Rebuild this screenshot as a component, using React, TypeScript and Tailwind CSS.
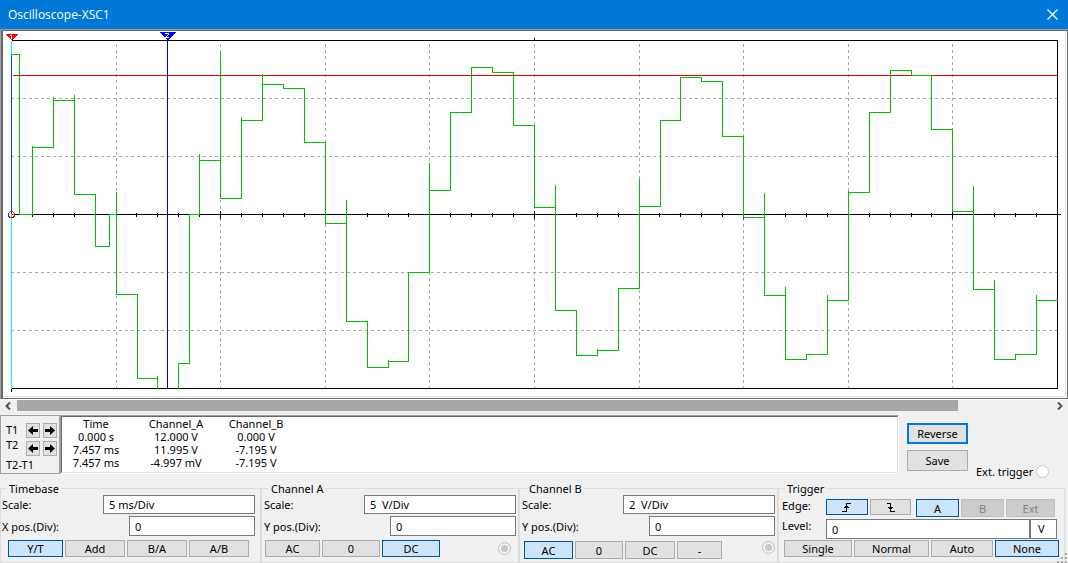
import type { ReactNode } from "react";
import clsx from "clsx";

const GRID_X = [116, 220, 325, 429, 534, 639, 743, 848, 952];
const GRID_Y = [98, 156, 272, 330];
const MAJOR_TICKS = [220, 534, 743, 952];
const MINOR_TICKS = Array.from({ length: 50 }, (_, i) => Math.round(10.96 + 20.92 * i)).slice(1);

// channel B, clipped at the bottom of the screen between 157 and 178
const TRACE =
  "M11 54H19V214H32V145V147H53V96V100H74V94V194H95V246H109V214H116V191V294H137V293V378H157V375V388" +
  "M178 388V363H189V214H199V153V160H220V51V198H241V116V120H262V73V84H283V88H304V142H325V223H346V199V321" +
  "H367V367H388V359V361H408V272H429V162V190H450V112H471V67H492V72H513V71V125H534V207H555V184V310" +
  "H576V355H597V348V350H618V288H639V178V206H660V120H680V77H701V81H722V80V136H743V217H764V192V295" +
  "H785V286V359H806V354H827V294V300H848V190V192H869V111V112H890V70H911V75H931V129H952V211H973V185V289" +
  "H994V279V359H1015V354H1036V294V300H1057";

const READINGS = [
  ["0.000 s", "12.000 V", "0.000 V"],
  ["7.457 ms", "11.995 V", "-7.195 V"],
  ["7.457 ms", "-4.997 mV", "-7.195 V"],
];

const TitleBar = () => (
  <header className="flex h-[29px] items-center justify-between bg-[#0078d7] pr-[10px] pl-2 text-white">
    <h1 className="font-['Open_Sans',sans-serif] text-xs">Oscilloscope-XSC1</h1>
    <button type="button" aria-label="Close">
      <svg width="11" height="11" viewBox="0 0 11 11" fill="none" stroke="currentColor" strokeWidth="1.3">
        <path d="M.5 .5l10 10M10.5 .5l-10 10" />
      </svg>
    </button>
  </header>
);

const Screen = () => (
  <div className="border-t border-r border-b border-l border-t-[#a0a0a0] border-r-[#696969] border-b-[#696969] border-l-[#a0a0a0] bg-white">
    <div className="border-t border-l-2 border-t-[#696969] border-l-[#696969] pr-px pb-px">
      <div className="border-r border-b border-[#e3e3e3]">
        <svg
          className="block h-[365px] w-full"
          viewBox="3 31 1062 365"
          preserveAspectRatio="none"
          shapeRendering="crispEdges"
          fill="none"
        >
          <g transform="translate(.5 .5)">
            <g stroke="#a6a6a6" strokeDasharray="3 3">
              {GRID_X.map((x) => (
                <path key={x} d={`M${x} 43.5V388`} />
              ))}
              {GRID_Y.map((y) => (
                <path key={y} d={`M10.5 ${y}H1057`} />
              ))}
            </g>
            <g stroke="#000">
              <path d="M11 40H1057V388H11V391M534 37V40M11 214H1060" />
              {MINOR_TICKS.map((x) => (
                <path key={x} d={`M${x} 212.5V216.5`} />
              ))}
              {MAJOR_TICKS.map((x) => (
                <path key={x} d={`M${x} 210.5V218.5`} />
              ))}
            </g>
            <path d="M12 75H1057" stroke="#e60000" />
            <path d={TRACE} stroke="#00c000" />
            <path d="M11 40.5V388" stroke="#00ffff" />
            <path d="M11 54V213" stroke="#0040ff" />
            <path d="M167 40V387.5" stroke="#0000d8" />
            <circle cx="11" cy="214" r="3" stroke="#e00000" />
            <path d="M8 214H14" stroke="#00ffff" strokeDasharray="1 1" />
          </g>
          <path d="M5 34H18L11.5 40.5Z" fill="#ff0000" />
          <path d="M10 35H12V39H11V36H10Z" fill="#fff" />
          <path d="M159 32H176L167.5 40.5Z" fill="#0000ff" />
          <path d="M165 33h4v2h-1v1h-1v1h2v1h-4v-1h1v-1h1v-1h1v-1h-3z" fill="#fff" />
        </svg>
      </div>
    </div>
  </div>
);

const ScrollArrow = ({ label, d }: { label: string; d: string }) => (
  <button type="button" aria-label={label} className="flex w-[17px] justify-center">
    <svg width="8" height="8" viewBox="0 0 8 8" fill="none" stroke="#505050" strokeWidth="2">
      <path d={d} />
    </svg>
  </button>
);

const ScrollBar = () => (
  <div className="h-4 border-t border-white">
    <div className="flex h-[11px] items-center">
      <ScrollArrow label="Scroll left" d="M5 .5L1.500 4L5 7.500" />
      <div className="h-[11px] flex-1">
        <div className="h-full w-[91%] bg-[#a6a6a6]" />
      </div>
      <ScrollArrow label="Scroll right" d="M2 .5L5.500 4L2 7.500" />
    </div>
  </div>
);

type ButtonProps = {
  children: ReactNode;
  className?: string;
  active?: boolean;
  disabled?: boolean;
  focused?: boolean;
  label?: string;
};

const Button = ({ children, className, active, disabled, focused, label }: ButtonProps) => (
  <button
    type="button"
    disabled={disabled}
    aria-label={label}
    className={clsx(
      "flex items-center justify-center",
      focused ? "border-2 border-[#0078d7] bg-[#e1e1e1]" : "border",
      active && "border-[#00549a] bg-[#cce4f7]",
      disabled && "border-[#bfbfbf] bg-[#cccccc] text-[#838383]",
      !active && !disabled && !focused && "border-[#adadad] bg-[#e1e1e1]",
      className,
    )}
  >
    {children}
  </button>
);

const CursorArrows = ({ name }: { name: string }) => (
  <div className="flex gap-[3px]">
    <Button label={`${name} left`} className="h-[15px] w-[14px]">
      <svg width="10" height="9" viewBox="0 0 10 9">
        <path d="M0 4.500L5 0V3H10V6H5V9Z" />
      </svg>
    </Button>
    <Button label={`${name} right`} className="h-[15px] w-[14px]">
      <svg width="10" height="9" viewBox="0 0 10 9">
        <path d="M10 4.500L5 0V3H0V6H5V9Z" />
      </svg>
    </Button>
  </div>
);

const Readout = () => (
  <div className="flex h-[59px]">
    <div className="flex w-[60px] justify-between border border-[#a0a0a0] pt-[7px] pr-[2px] pl-[5px]">
      <div className="flex flex-col whitespace-nowrap">
        <span className="h-[15px]">T1</span>
        <span className="h-5">T2</span>
        <span className="w-0">T2-T1</span>
      </div>
      <div className="flex flex-col gap-[3px]">
        <CursorArrows name="T1" />
        <CursorArrows name="T2" />
      </div>
    </div>
    <div className="flex-1 border border-t-[#a0a0a0] border-r-white border-b-white border-l-[#a0a0a0]">
      <div className="h-full border border-t-[#696969] border-r-[#e3e3e3] border-b-[#e3e3e3] border-l-[#696969] bg-white">
        <table className="table-fixed text-center leading-[13px]">
          <thead>
            <tr>
              <th className="w-[68px] font-normal">Time</th>
              <th className="w-[92px] font-normal">Channel_A</th>
              <th className="w-[68px] font-normal">Channel_B</th>
            </tr>
          </thead>
          <tbody>
            {READINGS.map((row, i) => (
              <tr key={i}>
                {row.map((value, j) => (
                  <td key={j}>{value}</td>
                ))}
              </tr>
            ))}
          </tbody>
        </table>
      </div>
    </div>
    <div className="flex w-[169px] items-start pl-2">
      <div className="flex flex-col gap-[6px] pt-2">
        <Button focused className="h-[21px] w-[61px]">Reverse</Button>
        <Button className="h-[21px] w-[61px]">Save</Button>
      </div>
      <label className="flex items-center gap-[3px] pt-[50px] pl-2 whitespace-nowrap">
        Ext. trigger
        <input
          type="radio"
          name="ext"
          className="size-[13px] appearance-none rounded-full border border-[#c8c8c8] bg-white"
        />
      </label>
    </div>
  </div>
);

const Group = ({ title, className, children }: { title: string; className: string; children: ReactNode }) => (
  <fieldset className={clsx("min-w-0 border border-[#dcdcdc] pb-[3px]", className)}>
    <legend className="ml-[5px] px-[2px]">{title}</legend>
    <div className="flex flex-col">{children}</div>
  </fieldset>
);

type FieldProps = { id: string; label: string; value: string; className: string };

const Field = ({ id, label, value, className }: FieldProps) => (
  <div className="flex items-end justify-between">
    <label htmlFor={id} className="pb-[3px] whitespace-nowrap">
      {label}
    </label>
    <input id={id} defaultValue={value} className={clsx("border border-[#7a7a7a] bg-white px-[5px]", className)} />
  </div>
);

const Coupling = ({ name, className }: { name: string; className?: string }) => (
  <input
    type="radio"
    aria-label={name}
    disabled
    className={clsx(
      "ml-auto size-[13px] appearance-none rounded-full border border-[#c8c8c8] bg-[#c8c8c8] shadow-[inset_0_0_0_2px_#f4f4f4]",
      className,
    )}
  />
);

const Controls = () => (
  <div className="grid grid-cols-[261fr_258fr_259fr_287fr] pt-2 pr-[3px]">
    <Group title="Timebase" className="pr-[5px] pl-px">
      <Field id="tb-scale" label="Scale:" value="5 ms/Div" className="h-[19px] w-[152px]" />
      <Field id="tb-pos" label="X pos.(Div):" value="0" className="mt-[2px] h-5 w-[126px]" />
      <div className="mt-1 flex gap-[2px] pl-[6px]">
        <Button active className="h-[17px] w-[55px]">Y/T</Button>
        <Button className="h-[17px] w-[60px]">Add</Button>
        <Button className="h-[17px] w-[60px]">B/A</Button>
        <Button className="h-[17px] w-[60px]">A/B</Button>
      </div>
    </Group>

    <Group title="Channel A" className="pr-[2px] pl-[2px]">
      <Field id="a-scale" label="Scale:" value="5  V/Div" className="h-[19px] w-[152px]" />
      <Field id="a-pos" label="Y pos.(Div):" value="0" className="mt-[2px] h-5 w-[126px]" />
      <div className="mt-1 flex items-center gap-[2px] pl-px">
        <Button className="h-[17px] w-[55px]">AC</Button>
        <Button className="h-[17px] w-[58px]">0</Button>
        <Button active className="h-[17px] w-[58px]">DC</Button>
        <Coupling name="Channel A" className="mr-[5px]" />
      </div>
    </Group>

    <Group title="Channel B" className="pr-[2px] pl-[2px]">
      <Field id="b-scale" label="Scale:" value="2  V/Div" className="h-[19px] w-[152px]" />
      <Field id="b-pos" label="Y pos.(Div):" value="0" className="mt-[2px] h-5 w-[126px]" />
      <div className="mt-[5px] flex items-start gap-[2px] pl-[2px]">
        <Button active className="h-[18px] w-[49px]">AC</Button>
        <Button className="h-[18px] w-[48px]">0</Button>
        <Button className="h-[18px] w-[50px]">DC</Button>
        <Button className="h-[18px] w-[45px]">-</Button>
        <Coupling name="Channel B" />
      </div>
    </Group>

    <Group title="Trigger" className="pr-[5px] pl-px">
      <div className="flex items-start gap-[2px] pt-1 pl-[2px]">
        <span className="w-[42px]">Edge:</span>
        <Button active label="Rising edge" className="h-4 w-[42px]">
          <svg width="10" height="9" viewBox="0 0 10 9" fill="none" stroke="#000" shapeRendering="crispEdges">
            <path d="M0 8.500H5M4.500 9V0M4 .5H9M3 3.500H6M2 4.500H7" />
          </svg>
        </Button>
        <Button label="Falling edge" className="h-4 w-[41px]">
          <svg width="10" height="9" viewBox="0 0 10 9" fill="none" stroke="#000" shapeRendering="crispEdges">
            <path d="M1 .5H5M4.500 0V9M4 8.500H9M2 4.500H7M3 5.500H6" />
          </svg>
        </Button>
        <Button active className="ml-[3px] h-[18px] w-[43px]">A</Button>
        <Button disabled className="h-[18px] w-[43px]">B</Button>
        <Button disabled className="h-[18px] w-[49px]">Ext</Button>
      </div>
      <div className="mt-[2px] flex pr-[2px] pl-[2px]">
        <label htmlFor="level" className="w-[44px]">
          Level:
        </label>
        <input
          id="level"
          defaultValue="0"
          className="h-5 min-w-0 flex-1 border border-[#7a7a7a] bg-white px-[5px]"
        />
        <input
          aria-label="Level unit"
          defaultValue="V"
          className="h-5 w-[27px] border border-[#7a7a7a] bg-white px-[7px] pb-[2px]"
        />
      </div>
      <div className="mt-px flex gap-[2px] pl-1">
        <Button className="h-[17px] w-[68px]">Single</Button>
        <Button className="h-[17px] w-[75px]">Normal</Button>
        <Button className="h-[17px] w-[62px]">Auto</Button>
        <Button active className="h-[17px] w-[64px]">None</Button>
      </div>
    </Group>
  </div>
);

const App = () => (
  <main className="relative border-b border-[#0078d7] bg-[#f0f0f0] pb-px font-['Noto_Sans',sans-serif] text-[11px] leading-[13px] text-black">
    <TitleBar />
    <Screen />
    <ScrollBar />
    <Readout />
    <Controls />
    <svg className="absolute right-0 bottom-0" width="11" height="11" viewBox="0 0 11 11" fill="#a8a8a8">
      <path d="M8 0h2v2h-2zM4 4h2v2h-2zM8 4h2v2h-2zM0 8h2v2h-2zM4 8h2v2h-2zM8 8h2v2h-2z" />
    </svg>
  </main>
);

export default App;
